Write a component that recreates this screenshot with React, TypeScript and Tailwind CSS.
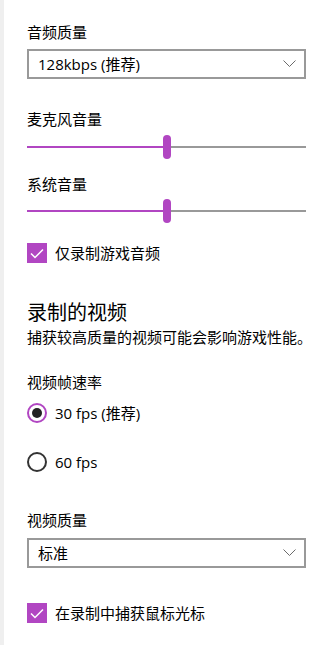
const purple = 'bg-[#b146c2]';

function Label({ children, className = '' }: { children: React.ReactNode; className?: string }) {
  return <div className={`text-[15px] leading-[20px] text-black ${className}`}>{children}</div>;
}

function Dropdown({ value, className = '' }: { value: string; className?: string }) {
  return (
    <div className={`flex h-[30px] w-[279px] items-center justify-between border-2 border-[#999999] bg-white pl-[9px] pr-[8px] ${className}`}>
      <span className="text-[15px] leading-[20px] text-black">{value}</span>
      <svg width="13" height="8" viewBox="0 0 13 8" fill="none">
        <polyline points="0.5,0.5 6.5,6.5 12.5,0.5" stroke="#6b6b6b" strokeWidth="1" />
      </svg>
    </div>
  );
}

function Slider({ value, className = '' }: { value: number; className?: string }) {
  return (
    <div className={`relative h-[24px] w-[279px] ${className}`}>
      <div className="absolute left-0 right-0 top-[11px] flex h-[2px]">
        <div className={purple} style={{ width: `${value}%` }} />
        <div className="flex-1 bg-[#999999]" />
      </div>
      <div
        className={`absolute top-0 h-[24px] w-[8px] -translate-x-1/2 rounded-full ${purple}`}
        style={{ left: `${value}%` }}
      />
    </div>
  );
}

function Checkbox({ label, className = '' }: { label: string; className?: string }) {
  return (
    <div className={`flex items-center ${className}`}>
      <div className={`flex h-[20px] w-[20px] items-center justify-center ${purple}`}>
        <svg width="14" height="11" viewBox="0 0 14 11" fill="none">
          <polyline points="1,5.5 5,9.5 13,1.5" stroke="white" strokeWidth="1.5" />
        </svg>
      </div>
      <span className="ml-[8px] text-[15px] leading-[20px] text-black">{label}</span>
    </div>
  );
}

function Radio({ label, checked, className = '' }: { label: string; checked?: boolean; className?: string }) {
  return (
    <div className={`flex items-center ${className}`}>
      <div
        className={`flex h-[20px] w-[20px] items-center justify-center rounded-full border-2 ${
          checked ? 'border-[#b146c2]' : 'border-[#333333]'
        }`}
      >
        {checked && <div className="h-[10px] w-[10px] rounded-full bg-[#222222]" />}
      </div>
      <span className="ml-[8px] text-[15px] leading-[20px] text-black">{label}</span>
    </div>
  );
}

export default function App() {
  return (
    <div
      className="h-[645px] w-[330px] overflow-hidden border-l-4 border-[#efefef] bg-white pl-[23px] pt-[22px]"
      style={{ fontFamily: '"Open Sans", "Noto Sans CJK SC", sans-serif' }}
    >
      <Label>音频质量</Label>
      <Dropdown value="128kbps (推荐)" className="mt-[7px]" />

      <Label className="mt-[30px]">麦克风音量</Label>
      <Slider value={50} className="mt-[6px]" />

      <Label className="mt-[15px]">系统音量</Label>
      <Slider value={50} className="mt-[5px]" />

      <Checkbox label="仅录制游戏音频" className="mt-[20px]" />

      <div className="mt-[36px] text-[20px] leading-[28px] text-black">录制的视频</div>
      <Label className="whitespace-nowrap">捕获较高质量的视频可能会影响游戏性能。</Label>

      <Label className="mt-[25px]">视频帧速率</Label>
      <Radio label="30 fps (推荐)" checked className="mt-[11px]" />
      <Radio label="60 fps" className="mt-[29px]" />

      <Label className="mt-[38px]">视频质量</Label>
      <Dropdown value="标准" className="mt-[8px]" />

      <Checkbox label="在录制中捕获鼠标光标" className="mt-[35px]" />
    </div>
  );
}
